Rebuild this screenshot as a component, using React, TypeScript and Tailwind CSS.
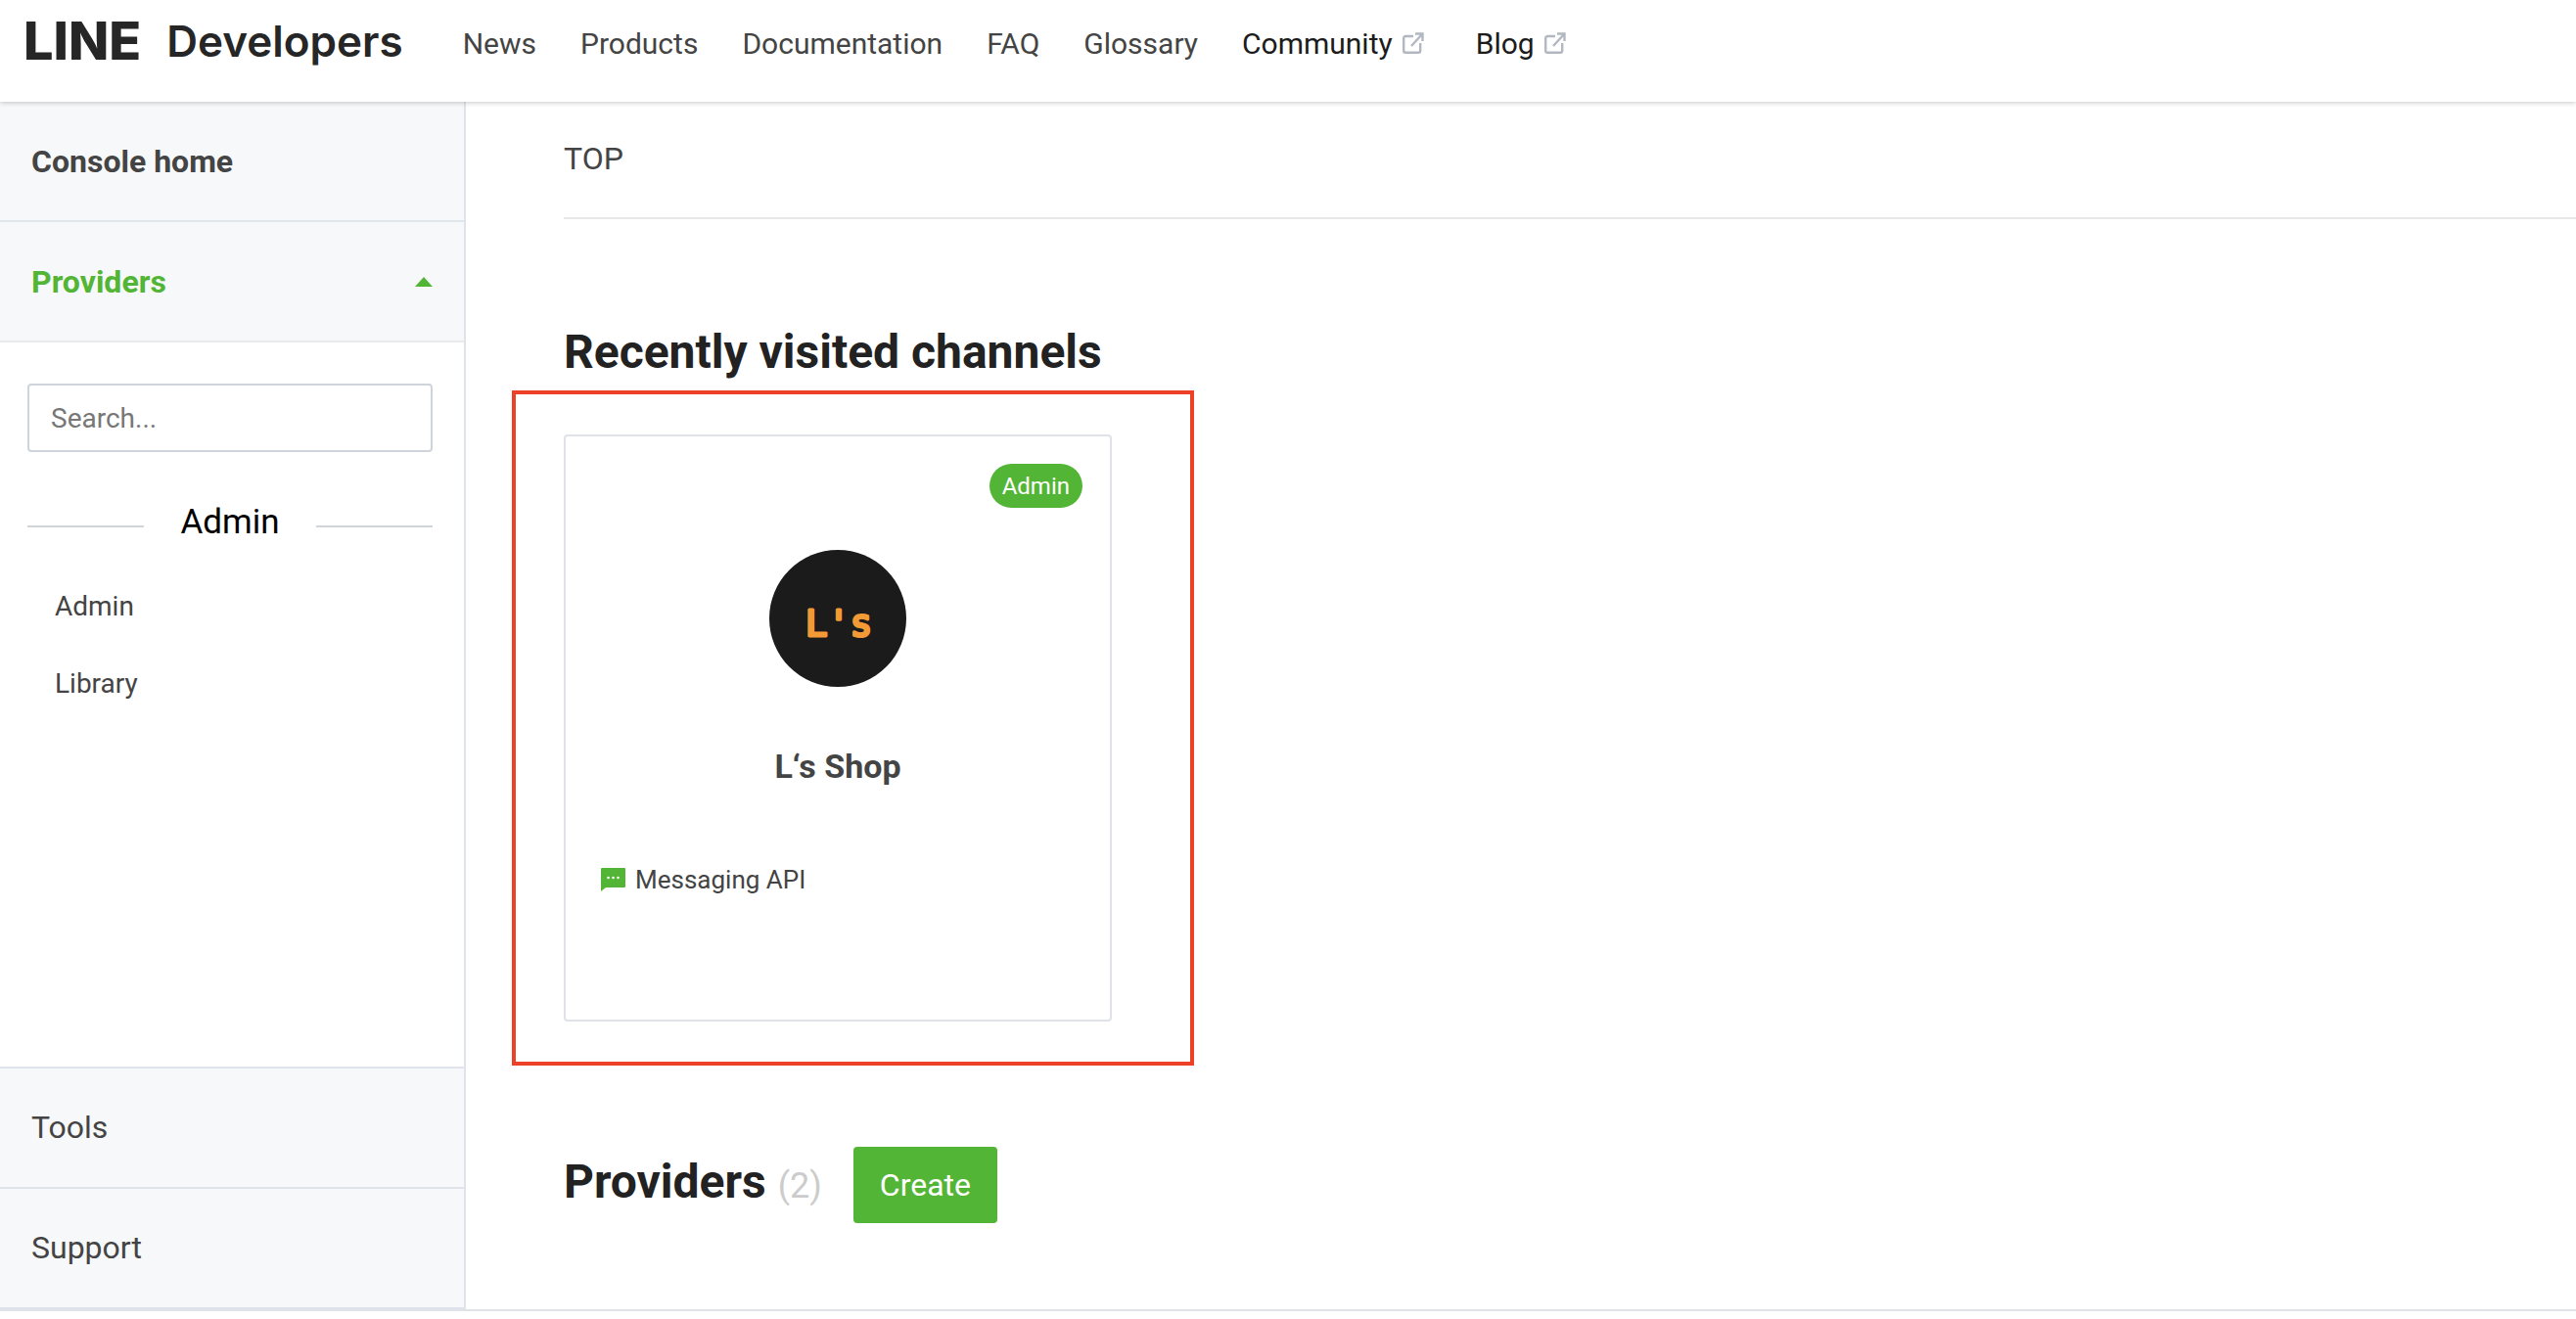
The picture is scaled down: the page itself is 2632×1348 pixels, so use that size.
import React from "react";

const navLinks = ["News", "Products", "Documentation", "FAQ", "Glossary"];
const externalLinks = ["Community", "Blog"];
const adminProviders = ["Admin", "Library"];

function ExternalIcon() {
  return (
    <svg className="size-[22px]" viewBox="0 0 22 22" fill="none" stroke="#b1b8c1" strokeWidth="2.4" aria-hidden="true">
      <path d="M11 4H3.2A2 2 0 0 0 1.200 6v12.800a2 2 0 0 0 2 2h13a2 2 0 0 0 2-2V11" />
      <path d="M13 1.500h7.500V9M20.500 1.500 9 14" />
    </svg>
  );
}

function MessageIcon() {
  return (
    <svg className="h-6 w-[25px]" viewBox="0 0 25 24" aria-hidden="true">
      <path d="M1 0h23a1 1 0 0 1 1 1v18a1 1 0 0 1-1 1H5l-5 4V1a1 1 0 0 1 1-1z" fill="#53b535" />
      <g fill="#fff">
        <circle cx="7.500" cy="10" r="1.300" />
        <circle cx="12.500" cy="10" r="1.300" />
        <circle cx="17.500" cy="10" r="1.300" />
      </g>
    </svg>
  );
}

function ChannelAvatar() {
  return (
    <svg className="size-[140px]" viewBox="0 0 140 140" role="img" aria-label="L's">
      <circle cx="70" cy="70" r="70" fill="#1b1b1b" />
      <text
        x="71"
        y="88"
        textAnchor="middle"
        fontSize="38"
        fill="#f29a36"
        stroke="#f29a36"
        strokeWidth="3"
        strokeLinejoin="round"
        className="font-['DejaVu_Sans_Mono',monospace]"
      >
        L's
      </text>
    </svg>
  );
}

function Header() {
  return (
    <header className="relative z-10 flex h-[104px] items-start bg-white pl-6 shadow-[0_1px_5px_rgba(0,0,0,0.22)]">
      <a href="#" className="flex h-[84px] items-center gap-[26px] text-[#262626]">
        <span className="font-['Inter',sans-serif] text-[54px] font-extrabold leading-none">LINE</span>
        <span className="font-['Inter',sans-serif] text-[44px] font-semibold leading-none">Developers</span>
      </a>
      <nav className="ml-[61px] flex h-[88px] items-center gap-[45px] text-[30px]">
        {navLinks.map((label) => (
          <a key={label} href="#">
            {label}
          </a>
        ))}
        {externalLinks.map((label) => (
          <a key={label} href="#" className="mr-2 flex items-center gap-[10px] text-[#1c1c1c]">
            {label}
            <ExternalIcon />
          </a>
        ))}
      </nav>
    </header>
  );
}

function Sidebar() {
  return (
    <aside className="flex w-[476px] shrink-0 flex-col border-r-2 border-[#dfe4ec] text-[32px]">
      <a href="#" className="flex h-[123px] items-center border-b-2 border-[#dfe6ed] bg-[#f7f8fa] px-8 font-bold">
        Console home
      </a>
      <button
        type="button"
        className="flex h-[123px] items-center justify-between border-b-2 border-[#e9eaec] bg-[#f7f8fa] px-8 font-bold text-[#53b535]"
      >
        Providers
        <svg className="h-[10px] w-[18px]" viewBox="0 0 18 10" aria-hidden="true">
          <path d="M9 0l9 10H0z" fill="#53b535" />
        </svg>
      </button>
      <div className="grow pl-7 pr-8 pt-[42px]">
        <input
          type="search"
          aria-label="Search providers"
          placeholder="Search..."
          className="block h-[70px] w-full rounded border-2 border-[#cfd4da] px-[22px] text-[28px] outline-none placeholder:text-[#777]"
        />
        <h2 className="mt-12 flex h-12 items-center justify-between text-[35px] text-black">
          <span className="mt-2 h-[2px] w-[119px] bg-[#cfd6da]" />
          Admin
          <span className="mt-2 h-[2px] w-[119px] bg-[#cfd6da]" />
        </h2>
        <ul className="mt-[22px] pl-7 text-[28px]">
          {adminProviders.map((name) => (
            <li key={name}>
              <a href="#" className="flex h-[79px] items-center">
                {name}
              </a>
            </li>
          ))}
        </ul>
      </div>
      {["Tools", "Support"].map((label) => (
        <a
          key={label}
          href="#"
          className="flex h-[123px] items-center border-t-2 border-[#dfe4ec] bg-[#f7f8fa] px-8 pb-[2px]"
        >
          {label}
        </a>
      ))}
      <div className="h-[2px] bg-[#dfe4ec]" />
    </aside>
  );
}

function ChannelCard() {
  return (
    <div className="relative h-[600px] w-[560px]">
      <a href="#" className="relative flex h-full flex-col items-center rounded border-2 border-[#dfe3e8]">
        <span className="absolute right-7 top-7 flex h-[45px] items-center rounded-full bg-[#53b535] px-[13px] text-[24px] text-white">
          Admin
        </span>
        <span className="mt-[116px]">
          <ChannelAvatar />
        </span>
        <strong className="mt-14 text-[34px] font-bold leading-[50px]">L‘s Shop</strong>
        <span className="mt-[71px] flex items-center gap-[10px] self-start pl-9 text-[26px] leading-[40px]">
          <MessageIcon />
          Messaging API
        </span>
      </a>
      <div className="pointer-events-none absolute -bottom-[45px] -left-[53px] -right-[84px] -top-[45px] border-4 border-[#ec4027]" />
    </div>
  );
}

export default function App() {
  return (
    <div className="flex min-h-screen flex-col bg-white pb-2 font-['Roboto',sans-serif] text-[#444]">
      <Header />
      <div className="flex grow border-b-2 border-[#dfe3e8]">
        <Sidebar />
        <main className="grow pl-[100px]">
          <div className="flex h-[120px] items-center border-b-2 border-[#e8e8e8] pb-[2px] text-[32px]">TOP</div>
          <h1 className="mt-[108px] text-[48px] font-bold leading-[56px] text-[#222]">Recently visited channels</h1>
          <div className="mt-14">
            <ChannelCard />
          </div>
          <div className="mt-32 flex h-[78px] items-center">
            <h2 className="flex items-baseline gap-3 pb-[2px] text-[48px] font-bold leading-[56px] text-[#222]">
              Providers
              <span className="text-[36px] font-normal text-[#ccc]">(2)</span>
            </h2>
            <button type="button" className="ml-8 h-[78px] rounded bg-[#53b535] px-[27px] text-[32px] text-white">
              Create
            </button>
          </div>
        </main>
      </div>
    </div>
  );
}
